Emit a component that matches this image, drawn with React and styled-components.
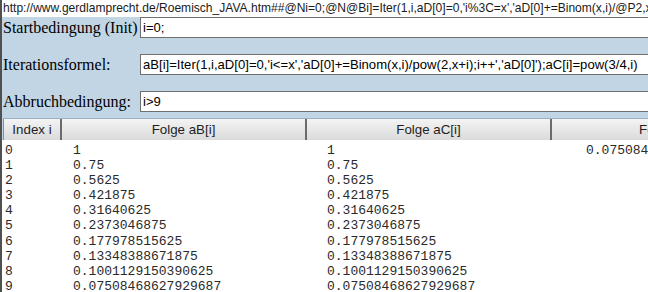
import styled, { createGlobalStyle } from "styled-components";

const GlobalStyle = createGlobalStyle`
  html, body {
    margin: 0;
    padding: 0;
    background: #c1d5e4;
  }
  body {
    overflow: hidden;
  }
`;

const rows = [
  ["0", "1", "1", "0.07508468627929687"],
  ["1", "0.75", "0.75"],
  ["2", "0.5625", "0.5625"],
  ["3", "0.421875", "0.421875"],
  ["4", "0.31640625", "0.31640625"],
  ["5", "0.2373046875", "0.2373046875"],
  ["6", "0.177978515625", "0.177978515625"],
  ["7", "0.13348388671875", "0.13348388671875"],
  ["8", "0.1001129150390625", "0.1001129150390625"],
  ["9", "0.07508468627929687", "0.07508468627929687"],
];

const fields = [
  { label: "Startbedingung (Init)", value: "i=0;" },
  {
    label: "Iterationsformel:",
    value:
      "aB[i]=Iter(1,i,aD[0]=0,'i<=x','aD[0]+=Binom(x,i)/pow(2,x+i);i++','aD[0]');aC[i]=pow(3/4,i)",
  },
  { label: "Abbruchbedingung:", value: "i>9" },
];

const headers = ["Index i", "Folge aB[i]", "Folge aC[i]", "Folge aD[0]"];

export default function App() {
  return (
    <>
      <GlobalStyle />
      <Page>
        <UrlBar>
          http://www.gerdlamprecht.de/Roemisch_JAVA.htm##@Ni=0;@N@Bi]=Iter(1,i,aD[0]=0,'i%3C=x','aD[0]+=Binom(x,i)/@P2,x+i);i++','aD[0]');@Ci]=pow(3/4,i)
        </UrlBar>
        <Form>
          {fields.map((f) => (
            <Row key={f.label}>
              <Label>{f.label}</Label>
              <Field readOnly value={f.value} />
            </Row>
          ))}
        </Form>
        <Table>
          <HeadRow>
            {headers.map((h, i) => (
              <HeadCell key={h} $first={i === 0}>
                {h}
              </HeadCell>
            ))}
          </HeadRow>
          <Body>
            {rows.map((r) => (
              <DataRow key={r[0]}>
                {[0, 1, 2, 3].map((c) => (
                  <DataCell key={c}>{r[c] || ""}</DataCell>
                ))}
              </DataRow>
            ))}
          </Body>
        </Table>
      </Page>
    </>
  );
}

const Page = styled.div`
  width: 100vw;
  height: 100vh;
  overflow: hidden;
  border-left: 2px solid #505050;
  box-sizing: border-box;
  background: #c1d5e4;
`;

const UrlBar = styled.div`
  height: 17px;
  line-height: 16px;
  padding-left: 1px;
  background: #ffffff;
  color: #1a1a1a;
  font-family: "Liberation Sans", Arial, sans-serif;
  font-size: 12.05px;
  white-space: nowrap;
  overflow: hidden;
  width: 760px;
`;

const Form = styled.div`
  display: flex;
  flex-direction: column;
  gap: 16px;
  width: 760px;
`;

const Row = styled.div`
  display: grid;
  grid-template-columns: 138px 1fr;
  align-items: center;
  height: 21px;
`;

const Label = styled.div`
  padding-left: 1px;
  font-family: "Liberation Serif", "Times New Roman", serif;
  font-size: 16px;
  color: #000;
  white-space: nowrap;
`;

const Field = styled.input`
  box-sizing: border-box;
  height: 21px;
  width: 100%;
  margin: 0;
  padding: 0 2px;
  border: 1px solid #6f6f6f;
  background: #ffffff;
  color: #000;
  font-family: "Liberation Sans", Arial, sans-serif;
  font-size: 13.1px;
  outline: none;
`;

const Table = styled.div`
  margin-top: 6px;
  margin-left: 1px;
  width: 800px;
`;

const HeadRow = styled.div`
  display: grid;
  grid-template-columns: 59px 245px 245px 245px;
  height: 22px;
  border-top: 1px solid #9cb0c0;
  box-sizing: border-box;
`;

const HeadCell = styled.div`
  display: flex;
  align-items: center;
  justify-content: center;
  box-sizing: border-box;
  background: linear-gradient(#f4f4f4, #dadada);
  border-left: ${(p) => (p.$first ? "1px solid #8c8c8c" : "none")};
  border-right: 2px solid #6b6b6b;
  color: #1e1e1e;
  font-family: "Liberation Sans", Arial, sans-serif;
  font-size: 13.33px;
`;

const Body = styled.div`
  background: #ffffff;
  padding: 3px 0 0 1px;
  height: 200px;
  margin-left: -1px;
`;

const DataRow = styled.div`
  display: grid;
  grid-template-columns: 68px 254px 259px 300px;
  height: 15.1px;
  line-height: 15px;
`;

const DataCell = styled.div`
  padding-left: 2px;
  font-family: "Liberation Mono", "Courier New", monospace;
  font-size: 13px;
  color: #2a2a2a;
  white-space: nowrap;
`;
